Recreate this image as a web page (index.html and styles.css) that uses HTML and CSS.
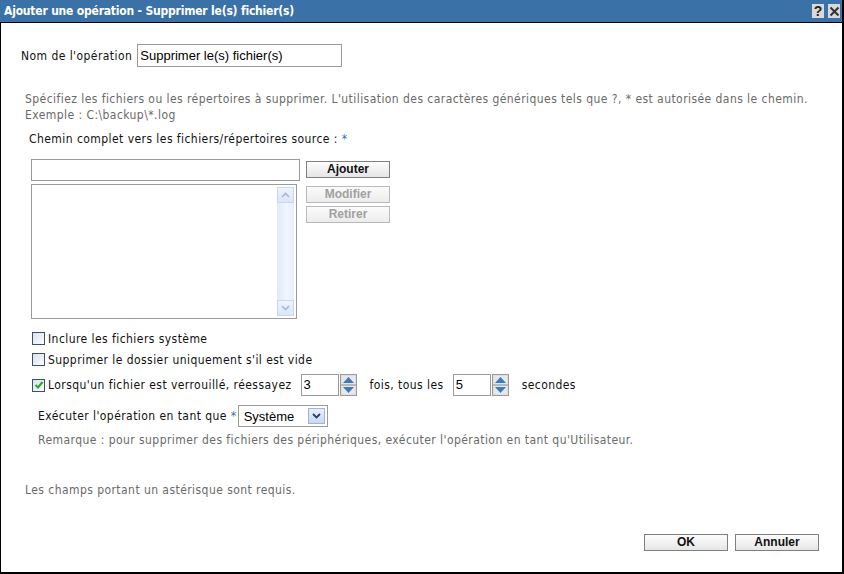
FILE: index.html
```html
<!DOCTYPE html>
<html lang="fr">
<head>
<meta charset="utf-8">
<title>Ajouter une opération</title>
<link rel="stylesheet" href="styles.css">
</head>
<body>
<div class="win">
  <div class="titlebar">
    <span class="title">Ajouter une opération - Supprimer le(s) fichier(s)</span>
    <div class="tbtns">
      <span class="tb">?</span>
      <span class="tb">
        <svg width="11" height="11" viewBox="0 0 11 11"><path d="M1.5 1.5 L9.5 9.5 M9.5 1.5 L1.5 9.5" stroke="#333" stroke-width="2"/></svg>
      </span>
    </div>
  </div>
  <div class="content">
    <div class="name-row">
      <span class="lbl">Nom de l'opération</span>
      <div class="tbox name-box">Supprimer le(s) fichier(s)</div>
    </div>
    <p class="desc">Spécifiez les fichiers ou les répertoires à supprimer. L'utilisation des caractères génériques tels que ?, * est autorisée dans le chemin.<br>Exemple : C:\backup\*.log</p>
    <div class="lbl path-lbl">Chemin complet vers les fichiers/répertoires source : <span class="req">*</span></div>
    <div class="paths">
      <div class="pcol">
        <div class="tbox path-input"></div>
        <div class="listbox">
          <div class="sb">
            <div class="sbbtn"><svg width="9" height="6" viewBox="0 0 9 6"><path d="M1 5 L4.5 1.5 L8 5" fill="none" stroke="#a9b8cf" stroke-width="1.6"/></svg></div>
            <div class="sbtrack"></div>
            <div class="sbbtn"><svg width="9" height="6" viewBox="0 0 9 6"><path d="M1 1 L4.5 4.5 L8 1" fill="none" stroke="#a9b8cf" stroke-width="1.6"/></svg></div>
          </div>
        </div>
      </div>
      <div class="bcol">
        <button class="btn">Ajouter</button>
        <button class="btn dis first-dis">Modifier</button>
        <button class="btn dis">Retirer</button>
      </div>
    </div>
    <div class="opts">
      <label class="chk-row r1"><span class="chk"></span><span class="lbl">Inclure les fichiers système</span></label>
      <label class="chk-row r2"><span class="chk"></span><span class="lbl">Supprimer le dossier uniquement s'il est vide</span></label>
      <div class="chk-row r3">
        <span class="chk on"><svg width="10" height="10" viewBox="0 0 10 10"><path d="M1.5 5 L4 7.5 L8.5 2" fill="none" stroke="#2aa62a" stroke-width="2"/></svg></span>
        <span class="lbl">Lorsqu'un fichier est verrouillé, réessayez</span>
        <div class="tbox num n1">3</div>
        <span class="spin"><svg width="17" height="22" viewBox="0 0 17 22">
          <rect x="0.5" y="0.5" width="16" height="21" fill="#d6d6d6" stroke="#9a9a9a"/>
          <rect x="1.5" y="1.5" width="14" height="8.5" fill="#e8e8e8"/>
          <rect x="1.5" y="12" width="14" height="8.5" fill="#e8e8e8"/>
          <line x1="1" y1="11" x2="16" y2="11" stroke="#9a9a9a"/>
          <path d="M3 9 L8.5 3 L14 9 Z" fill="#3a7cc4"/>
          <path d="M3 13 L8.5 19 L14 13 Z" fill="#3a7cc4"/>
        </svg></span>
        <span class="lbl mid">fois, tous les</span>
        <div class="tbox num">5</div>
        <span class="spin"><svg width="17" height="22" viewBox="0 0 17 22">
          <rect x="0.5" y="0.5" width="16" height="21" fill="#d6d6d6" stroke="#9a9a9a"/>
          <rect x="1.5" y="1.5" width="14" height="8.5" fill="#e8e8e8"/>
          <rect x="1.5" y="12" width="14" height="8.5" fill="#e8e8e8"/>
          <line x1="1" y1="11" x2="16" y2="11" stroke="#9a9a9a"/>
          <path d="M3 9 L8.5 3 L14 9 Z" fill="#3a7cc4"/>
          <path d="M3 13 L8.5 19 L14 13 Z" fill="#3a7cc4"/>
        </svg></span>
        <span class="lbl last">secondes</span>
      </div>
      <div class="run-row">
        <span class="lbl">Exécuter l'opération en tant que <span class="req">*</span></span>
        <div class="select">
          <span class="sel-txt">Système</span>
          <span class="sel-btn"><svg width="9" height="6" viewBox="0 0 9 6"><path d="M1 1 L4.5 4.5 L8 1" fill="none" stroke="#2b3f66" stroke-width="1.8"/></svg></span>
        </div>
      </div>
      <p class="note">Remarque : pour supprimer des fichiers des périphériques, exécuter l'opération en tant qu'Utilisateur.</p>
    </div>
    <p class="desc req-note">Les champs portant un astérisque sont requis.</p>
    <div class="footer">
      <button class="btn fbtn">OK</button>
      <button class="btn fbtn">Annuler</button>
    </div>
  </div>
</div>
</body>
</html>
```

FILE: styles.css
```css
html, body {
  margin: 0;
  padding: 0;
  background: #fff;
}
.win {
  width: 844px;
  height: 574px;
  box-sizing: border-box;
  border-left: 1px solid #000;
  border-right: 2px solid #000;
  border-bottom: 2px solid #000;
  display: flex;
  flex-direction: column;
  font-family: "DejaVu Sans Condensed", "DejaVu Sans", sans-serif;
  font-size: 12px;
  letter-spacing: 0.44px;
  color: #111;
}
.titlebar {
  height: 22px;
  background: #3a72a8;
  border-bottom: 1px solid #000;
  display: flex;
  align-items: center;
  justify-content: space-between;
  padding-left: 4px;
  padding-right: 1px;
  margin-left: -1px;
}
.title {
  color: #fff;
  font-weight: bold;
  font-size: 12px;
  letter-spacing: -0.2px;
}
.tbtns {
  display: flex;
  gap: 4px;
  align-items: center;
  padding-right: 1px;
}
.tb {
  width: 12px;
  height: 14px;
  background: #d9d9d9;
  display: flex;
  align-items: center;
  justify-content: center;
  font-family: "Liberation Sans", Arial, sans-serif;
  font-weight: bold;
  font-size: 14px;
  letter-spacing: 0;
  color: #222;
}
.content {
  flex: 1;
  display: flex;
  flex-direction: column;
  padding-left: 20px;
}
.lbl {
  color: #111;
  white-space: nowrap;
}
.req {
  color: #3a72a8;
}
.name-row {
  margin-top: 21px;
  display: flex;
  align-items: center;
  gap: 5px;
}
.tbox {
  box-sizing: border-box;
  border: 1px solid #9a9a9a;
  background: #fff;
  font-family: "Liberation Sans", Arial, sans-serif;
  font-size: 13px;
  letter-spacing: 0;
  color: #000;
}
.name-box {
  width: 205px;
  height: 23px;
  line-height: 21px;
  padding-left: 2px;
}
.desc {
  margin: 24px 0 0 4px;
  color: #6a6a6a;
  line-height: 16px;
}
.path-lbl {
  margin: 8px 0 0 8px;
  line-height: 16px;
}
.paths {
  margin-top: 12px;
  margin-left: 10px;
  display: flex;
  gap: 6px;
}
.pcol {
  display: flex;
  flex-direction: column;
  gap: 3px;
}
.path-input {
  width: 269px;
  height: 22px;
}
.listbox {
  width: 266px;
  height: 135px;
  box-sizing: border-box;
  border: 1px solid #9a9a9a;
  display: flex;
  justify-content: flex-end;
  padding: 2px 2px 2px 0;
}
.sb {
  width: 17px;
  display: flex;
  flex-direction: column;
  background: linear-gradient(to right, #dfe9fb, #f3f7fe 60%, #e6eefc);
}
.sbbtn {
  height: 16px;
  box-sizing: border-box;
  border: 1px solid #c9d8f2;
  background: linear-gradient(#eef3fd, #dbe6fa);
  display: flex;
  align-items: center;
  justify-content: center;
}
.sbtrack {
  flex: 1;
}
.bcol {
  display: flex;
  flex-direction: column;
  gap: 3px;
  padding-top: 2px;
}
.btn {
  width: 84px;
  height: 17px;
  box-sizing: border-box;
  border: 1px solid #7f7f7f;
  background: linear-gradient(#fdfdfd, #e6e6e6);
  font-family: "Liberation Sans", Arial, sans-serif;
  font-weight: bold;
  font-size: 12px;
  letter-spacing: 0;
  color: #111;
  padding: 0;
  line-height: 15px;
  text-align: center;
}
.btn.dis {
  color: #a0a0a0;
  border-color: #b9b9b9;
  background: linear-gradient(#fbfbfb, #ececec);
}
.first-dis {
  margin-top: 5px;
}
.opts {
  margin-top: 11px;
  margin-left: 11px;
  display: flex;
  flex-direction: column;
}
.chk-row {
  display: flex;
  align-items: center;
  gap: 3px;
}
.r1, .r2 {
  height: 21px;
}
.r1 {
  margin-top: -2px;
}
.r3 {
  height: 24px;
  margin-top: 3px;
  gap: 0;
}
.r3 .chk {
  margin-right: 3px;
}
.chk {
  width: 13px;
  height: 13px;
  box-sizing: border-box;
  border: 1px solid #3d4f6e;
  background: linear-gradient(135deg, #dde3ea, #fbfcfd);
  display: flex;
  align-items: center;
  justify-content: center;
}
.num {
  width: 38px;
  height: 22px;
  line-height: 20px;
  padding-left: 2px;
}
.n1 {
  margin-left: 9px;
}
.spin {
  display: flex;
  margin-left: 1px;
}
.mid {
  margin-left: 13px;
  margin-right: 9px;
}
.last {
  margin-left: 13px;
}
.run-row {
  margin-top: 8px;
  margin-left: 6px;
  display: flex;
  align-items: center;
  gap: 1px;
}
.select {
  width: 90px;
  height: 22px;
  box-sizing: border-box;
  border: 1px solid #9a9a9a;
  display: flex;
  align-items: center;
  justify-content: space-between;
  padding-right: 2px;
}
.sel-txt {
  font-family: "Liberation Sans", Arial, sans-serif;
  font-size: 13px;
  letter-spacing: 0;
  padding-left: 5px;
  color: #000;
}
.sel-btn {
  width: 17px;
  height: 16px;
  box-sizing: border-box;
  border: 1px solid #9fb4d8;
  background: linear-gradient(#e9f0fc, #c9d9f3);
  display: flex;
  align-items: center;
  justify-content: center;
}
.note {
  margin: 5px 0 0 6px;
  color: #6a6a6a;
  line-height: 16px;
}
.req-note {
  margin-top: 34px;
}
.footer {
  margin-top: auto;
  margin-bottom: 21px;
  display: flex;
  justify-content: flex-end;
  gap: 7px;
  padding-right: 23px;
}
.fbtn {
  width: 84px;
  height: 17px;
}
```
